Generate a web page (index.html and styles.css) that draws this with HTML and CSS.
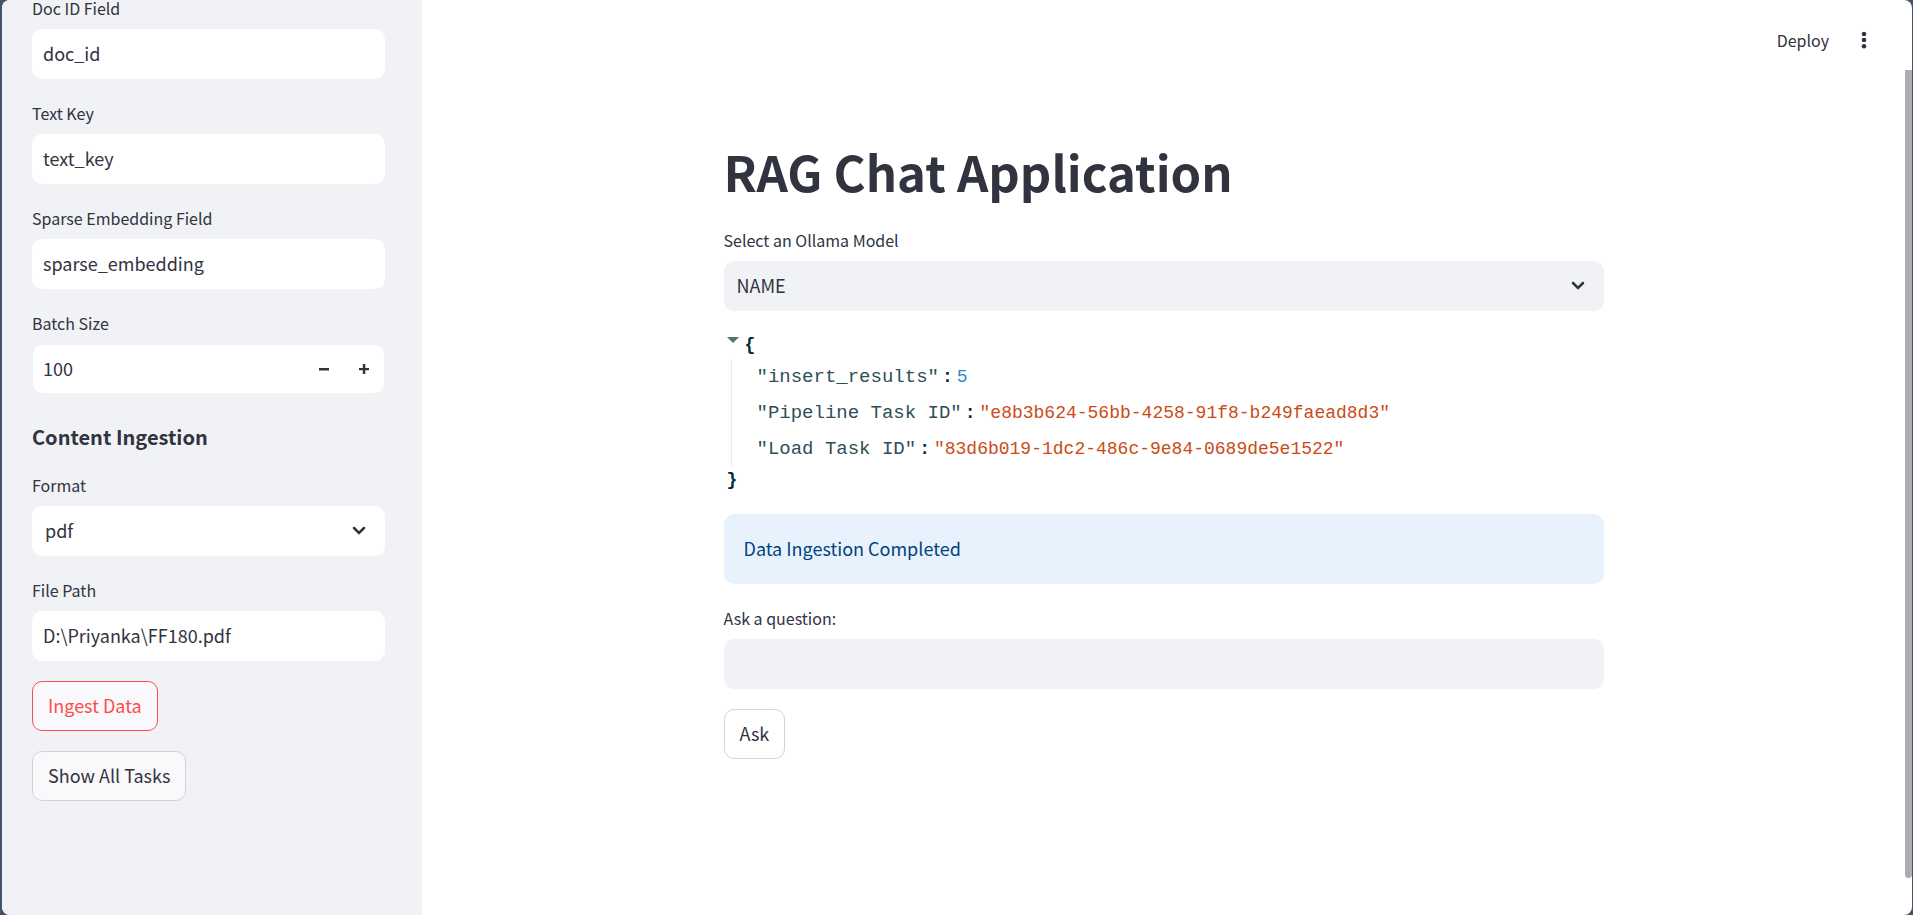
FILE: index.html
```html
<!DOCTYPE html>
<html lang="en">
<head>
<meta charset="utf-8">
<title>RAG Chat Application</title>
<link rel="stylesheet" href="styles.css">
</head>
<body>
<div class="app">
  <aside class="sidebar">
    <form class="stack sidebar-form">
      <div class="field">
        <label for="doc-id">Doc ID Field</label>
        <input class="control" id="doc-id" type="text" value="doc_id">
      </div>
      <div class="field">
        <label for="text-key">Text Key</label>
        <input class="control" id="text-key" type="text" value="text_key">
      </div>
      <div class="field">
        <label for="sparse">Sparse Embedding Field</label>
        <input class="control" id="sparse" type="text" value="sparse_embedding">
      </div>
      <div class="field">
        <label for="batch">Batch Size</label>
        <div class="number">
          <input class="number-input" id="batch" type="number" value="100">
          <button class="step" type="button" aria-label="Decrease">
            <svg width="10" height="10" viewBox="0 0 10 10"><path d="M0 4h10v2.5H0z"/></svg>
          </button>
          <button class="step" type="button" aria-label="Increase">
            <svg width="10" height="10" viewBox="0 0 10 10"><path d="M0 4h3.8V0h2.5v4H10v2.3H6.300V10H3.800V6.300H0z"/></svg>
          </button>
        </div>
      </div>
      <h2>Content Ingestion</h2>
      <div class="field">
        <label for="format">Format</label>
        <div class="select">
          <select class="control" id="format"><option>pdf</option></select>
          <svg class="chevron" width="14" height="10" viewBox="0 0 14 10"><path d="M2 2l5 5 5-5"/></svg>
        </div>
      </div>
      <div class="field">
        <label for="path">File Path</label>
        <input class="control" id="path" type="text" value="D:\Priyanka\FF180.pdf">
      </div>
      <button class="button active" type="button">Ingest Data</button>
      <button class="button" type="button">Show All Tasks</button>
    </form>
  </aside>
  <div class="page">
    <header class="toolbar">
      <button class="deploy" type="button">Deploy</button>
      <button class="menu" type="button" aria-label="Menu">
        <svg width="6" height="18" viewBox="0 0 6 18"><circle cx="3" cy="3" r="2.300"/><circle cx="3" cy="9" r="2.300"/><circle cx="3" cy="15.300" r="2.300"/></svg>
      </button>
    </header>
    <main class="stack content">
      <h1>RAG Chat Application</h1>
      <div class="field">
        <label for="model">Select an Ollama Model</label>
        <div class="select">
          <select class="control" id="model"><option>NAME</option></select>
          <svg class="chevron" width="14" height="10" viewBox="0 0 14 10"><path d="M2 2l5 5 5-5"/></svg>
        </div>
      </div>
      <div class="json">
        <div class="json-open">
          <svg width="12" height="6" viewBox="0 0 12 6"><path d="M0 0h12L6 6z"/></svg>
          <span class="brace">{</span>
        </div>
        <div class="json-body">
          <div class="pair"><span class="key">"insert_results"</span><span class="colon">:</span><span class="num">5</span></div>
          <div class="pair"><span class="key">"Pipeline Task ID"</span><span class="colon">:</span><span class="str">"e8b3b624-56bb-4258-91f8-b249faead8d3"</span></div>
          <div class="pair"><span class="key">"Load Task ID"</span><span class="colon">:</span><span class="str">"83d6b019-1dc2-486c-9e84-0689de5e1522"</span></div>
        </div>
        <div class="json-close brace">}</div>
      </div>
      <div class="alert" role="status">Data Ingestion Completed</div>
      <div class="field">
        <label for="question">Ask a question:</label>
        <input class="control" id="question" type="text">
      </div>
      <button class="button" type="button">Ask</button>
    </main>
    <div class="scrollbar"></div>
  </div>
</div>
</body>
</html>
```

FILE: styles.css
```css
* { box-sizing: border-box; }

body {
  margin: 0;
  background: #43536b;
  color: #31333f;
  font: 18px/30px "Noto Sans CJK SC", "Noto Sans", sans-serif;
}

input, select, button { font: inherit; color: inherit; margin: 0; }

.app {
  display: flex;
  height: 100vh;
  margin: 0 1px 0 2px;
  overflow: hidden;
  border-radius: 8px;
  background: #fff;
}

.sidebar {
  flex: 0 0 420px;
  overflow: hidden;
  padding: 0 37px 0 30px;
  background: #f0f2f6;
}

.stack {
  display: flex;
  flex-direction: column;
  gap: 20px;
}

/* The sidebar is scrolled slightly past its first label. */
.sidebar-form { margin-top: -6px; }

.field { display: flex; flex-direction: column; }

label {
  padding: 6px 0 13px;
  font-size: 16px;
  line-height: 16px;
}

.control {
  width: 100%;
  height: 50px;
  padding: 0 11px 2px;
  border: 0;
  border-radius: 10px;
  outline: 0;
  background: #fff;
}

.content .control { background: #f0f2f6; }

.select { position: relative; }
.select .control { padding: 0 13px 2px; appearance: none; }

.chevron {
  position: absolute;
  top: 20px;
  right: 19px;
  fill: none;
  stroke: #31333f;
  stroke-width: 2.500;
  stroke-linecap: round;
  pointer-events: none;
}

.number {
  display: flex;
  height: 50px;
  overflow: hidden;
  border: 1px solid #f0f2f6;
  border-radius: 10px;
  background: #fff;
}

.number-input {
  flex: 1;
  min-width: 0;
  padding: 0 10px 2px;
  border: 0;
  outline: 0;
  background: none;
  appearance: textfield;
}

.number-input::-webkit-inner-spin-button { appearance: none; }

.step {
  display: grid;
  place-items: center;
  width: 40px;
  padding: 0;
  border: 0;
  background: none;
  fill: #31333f;
}

h2 {
  margin: 0;
  padding: 8px 0 0;
  font-size: 20px;
  line-height: 29px;
  font-weight: 600;
}

.button {
  align-self: flex-start;
  height: 50px;
  padding: 0 15px 2px;
  border: 1px solid #d2d3d7;
  border-radius: 10px;
  background: #f9f9fb;
}

.content .button { background: #fff; }

.button.active {
  border-color: #ff4b4b;
  color: #ff4b4b;
}

.page {
  position: relative;
  flex: 1;
  min-width: 0;
  padding-right: 7px;
}

.toolbar {
  display: flex;
  justify-content: flex-end;
  align-items: center;
  gap: 32px;
  height: 80px;
  padding-right: 38px;
}

.toolbar button {
  padding: 0;
  border: 0;
  background: none;
  font-size: 16px;
}

.toolbar .deploy { padding-bottom: 1px; }

.menu { display: flex; fill: #31333f; }

.content {
  max-width: 880px;
  margin: 0 auto;
  padding-top: 61px;
}

h1 {
  margin: 0;
  padding-bottom: 5px;
  font-size: 49px;
  line-height: 60px;
  font-weight: 700;
}

.json {
  padding-left: 3px;
  font: 18px/28px "Liberation Mono", monospace;
}

.json-open {
  display: flex;
  gap: 6px;
}

.json-open svg { margin-top: 6px; fill: #586e75; }

.json-close { line-height: 27px; }

.brace {
  color: #002b36;
  font-weight: 700;
}

.json-body {
  margin-left: 4px;
  padding-left: 25px;
  border-left: 1px solid #ebebeb;
}

.pair { display: flex; line-height: 36px; }
.key { font-size: 19px; color: #2f4f58; }
.colon { padding: 0 4px 0 3px; font-weight: 700; color: #002b36; }
.num { color: #268bd2; }
.str { color: #cb4b16; }

.alert {
  padding: 19px 20px 21px;
  border-radius: 10px;
  background: #e8f2fc;
  color: #004280;
}

/* Overlay scrollbar thumb on the page edge. */
.scrollbar {
  position: absolute;
  top: 70px;
  right: 0;
  bottom: 37px;
  width: 7px;
  border-radius: 0 0 4px 4px;
  background: #acacb1;
}
```
